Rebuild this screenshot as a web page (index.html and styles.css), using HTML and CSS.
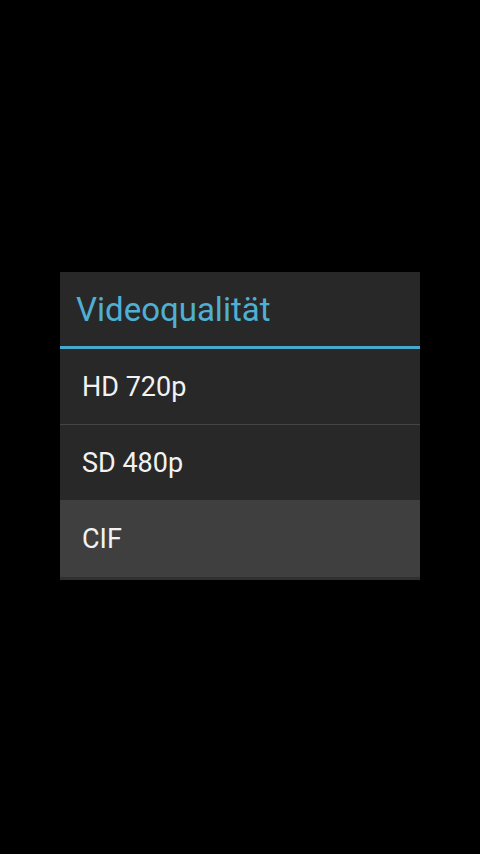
FILE: index.html
```html
<!DOCTYPE html>
<html lang="de">
<head>
    <meta charset="UTF-8">
    <meta name="viewport" content="width=device-width, initial-scale=1.0">
    <title>Videoqualität</title>
    <link rel="stylesheet" href="styles.css">
</head>
<body>
    <div class="screen">
        <div class="dialog">
            <div class="dialog-title">Videoqualität</div>
            <div class="title-line"></div>
            <ul class="options">
                <li class="option">HD 720p</li>
                <li class="option">SD 480p</li>
                <li class="option selected">CIF</li>
            </ul>
            <div class="dialog-bottom"></div>
        </div>
    </div>
</body>
</html>
```

FILE: styles.css
```css
body {
    margin: 0;
    padding: 0;
    background-color: #000000;
    font-family: Roboto, "Noto Sans", sans-serif;
}

.screen {
    width: 480px;
    height: 854px;
    display: flex;
    justify-content: center;
    padding-top: 272px;
    box-sizing: border-box;
}

.dialog {
    width: 360px;
    align-self: flex-start;
    background-color: #282828;
}

.dialog-title {
    height: 74px;
    display: flex;
    align-items: center;
    padding-left: 16px;
    font-size: 33px;
    color: #4fb0d3;
}

.title-line {
    height: 3px;
    background-color: #45a9cd;
}

.options {
    list-style: none;
    margin: 0;
    padding: 0;
}

.option {
    height: 75px;
    display: flex;
    align-items: center;
    padding-left: 22px;
    font-size: 27px;
    color: #f2f2f2;
    border-bottom: 1px solid #454545;
}

.option:nth-child(2) {
    border-bottom: none;
}

.option.selected {
    height: 77px;
    border-bottom: none;
    background-color: #3f3f3f;
}

.dialog-bottom {
    height: 3px;
    background-color: #303030;
}
```
